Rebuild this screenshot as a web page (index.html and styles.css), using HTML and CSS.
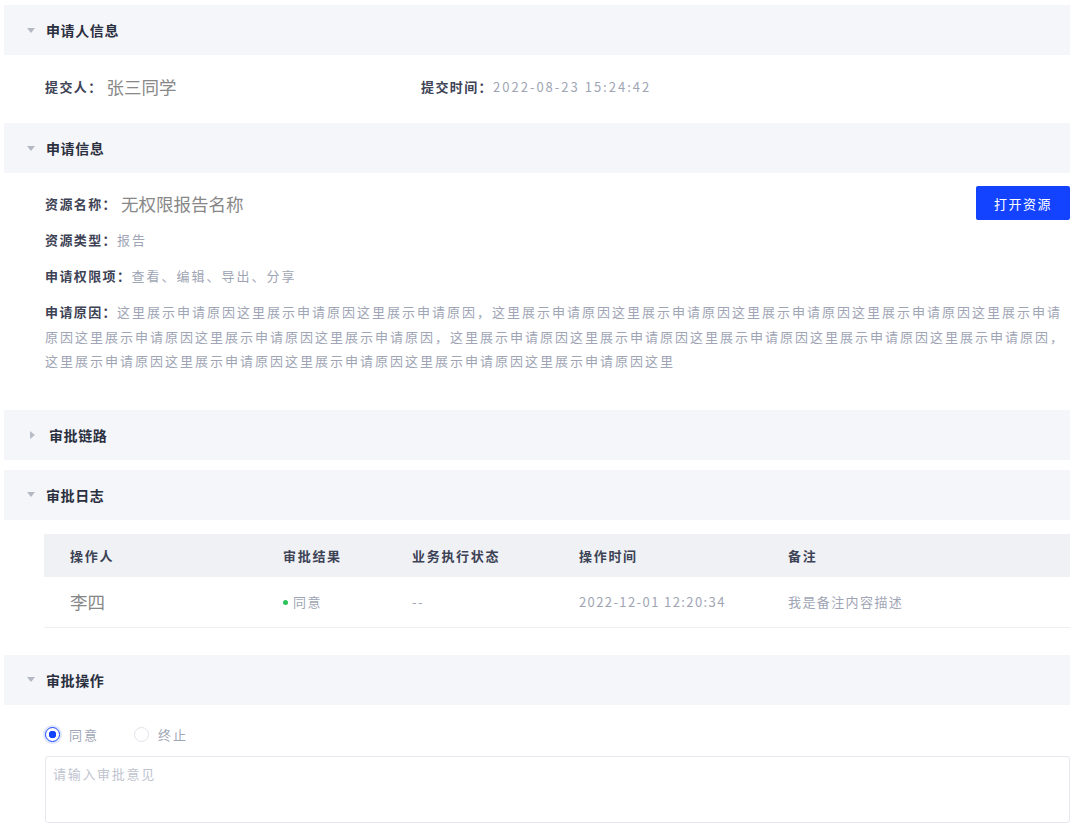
FILE: index.html
```html
<!DOCTYPE html>
<html lang="zh-CN">
<head>
  <meta charset="UTF-8" />
  <meta name="viewport" content="width=device-width, initial-scale=1.0"/>
  <title>审批详情</title>
  <link rel="stylesheet" href="styles.css">
</head>
<body>
<main class="detail">

  <section class="panel">
    <div class="panel-head"><span class="arrow down"></span>申请人信息</div>
    <div class="panel-body info-cols">
      <div class="field"><span class="label">提交人：</span><span class="value-lg">张三同学</span></div>
      <div class="field"><span class="label">提交时间：</span><span class="value">2022-08-23 15:24:42</span></div>
    </div>
  </section>

  <section class="panel">
    <div class="panel-head"><span class="arrow down"></span>申请信息</div>
    <div class="panel-body apply">
      <div class="field name-row">
        <div class="field"><span class="label">资源名称：</span><span class="value-lg">无权限报告名称</span></div>
        <button type="button" class="btn-primary">打开资源</button>
      </div>
      <div class="field row"><span class="label">资源类型：</span><span class="value">报告</span></div>
      <div class="field row"><span class="label">申请权限项：</span><span class="value">查看、编辑、导出、分享</span></div>
      <p class="reason"><span class="label">申请原因：</span><span class="value">这里展示申请原因这里展示申请原因这里展示申请原因，这里展示申请原因这里展示申请原因这里展示申请原因这里展示申请原因这里展示申请原因这里展示申请原因这里展示申请原因这里展示申请原因，这里展示申请原因这里展示申请原因这里展示申请原因这里展示申请原因这里展示申请原因，这里展示申请原因这里展示申请原因这里展示申请原因这里展示申请原因这里展示申请原因这里</span></p>
    </div>
  </section>

  <section class="panel">
    <div class="panel-head"><span class="arrow right"></span>审批链路</div>
  </section>

  <section class="panel">
    <div class="panel-head"><span class="arrow down"></span>审批日志</div>
    <div class="panel-body log">
      <table class="log-table">
        <thead>
          <tr><th class="c1">操作人</th><th class="c2">审批结果</th><th class="c3">业务执行状态</th><th class="c4">操作时间</th><th>备注</th></tr>
        </thead>
        <tbody>
          <tr>
            <td class="c1"><span class="value-lg">李四</span></td>
            <td class="c2"><span class="dot"></span>同意</td>
            <td class="c3">--</td>
            <td class="c4">2022-12-01 12:20:34</td>
            <td>我是备注内容描述</td>
          </tr>
        </tbody>
      </table>
    </div>
  </section>

  <section class="panel">
    <div class="panel-head"><span class="arrow down"></span>审批操作</div>
    <div class="panel-body operate">
      <div class="radios">
        <label class="radio checked"><span class="ring"></span>同意</label>
        <label class="radio"><span class="ring"></span>终止</label>
      </div>
      <textarea class="opinion" placeholder="请输入审批意见"></textarea>
    </div>
  </section>

</main>
</body>
</html>
```

FILE: styles.css
```css
body {
  margin: 0;
  background: #fff;
  font-family: "Noto Sans CJK SC", "Noto Sans", sans-serif;
  font-size: 13px;
  color: #3d4255;
}

.detail {
  padding: 5px 10px 0 4px;
}

.panel-head {
  height: 50px;
  background-color: #f5f6fa;
  display: flex;
  align-items: center;
  padding-left: 23px;
  font-size: 14px;
  font-weight: 700;
  letter-spacing: 0.6px;
  color: #2b3040;
}

.arrow {
  width: 0;
  height: 0;
  margin-right: 11px;
}
.arrow.down {
  border-left: 4px solid transparent;
  border-right: 4px solid transparent;
  border-top: 5px solid #b4b8c4;
}
.arrow.right {
  border-top: 4px solid transparent;
  border-bottom: 4px solid transparent;
  border-left: 5px solid #b8bcc8;
  margin-left: 3px;
  margin-right: 14px;
}

.panel-body {
  padding-left: 41px;
}

.label {
  font-weight: 700;
  letter-spacing: 1.4px;
  color: #3d4255;
}
.value {
  color: #a0a5b5;
  letter-spacing: 2px;
}
.value-lg {
  font-size: 17.5px;
  color: #888;
  margin-left: 4px;
}

.field {
  display: flex;
  align-items: center;
}

.info-cols {
  display: grid;
  grid-template-columns: 376px 1fr;
  height: 68px;
  align-items: center;
  padding-bottom: 6px;
  box-sizing: border-box;
}

.apply {
  padding-top: 13px;
  padding-bottom: 36px;
}
.name-row {
  justify-content: space-between;
  height: 34px;
  margin-bottom: 1px;
}
.row {
  height: 36px;
}

.btn-primary {
  width: 94px;
  height: 34px;
  border: none;
  border-radius: 2px;
  background-color: #1443ff;
  color: #fff;
  font-family: inherit;
  font-size: 13px;
  letter-spacing: 1.5px;
  cursor: pointer;
}

.reason {
  margin: 7px 0 0;
  line-height: 24.5px;
}

.panel:nth-child(4) {
  margin-top: 10px;
}

.log {
  padding: 14px 0 27px 40px;
}
.log-table {
  width: 100%;
  border-collapse: collapse;
}
.log-table th {
  height: 43px;
  background-color: #f0f1f5;
  text-align: left;
  font-weight: 700;
  letter-spacing: 1.7px;
  color: #3d4255;
  padding: 0;
}
.log-table td {
  height: 50px;
  border-bottom: 1px solid #eceef2;
  color: #a0a5b5;
  letter-spacing: 1.4px;
  padding: 0;
}
.log-table td .value-lg {
  margin-left: 0;
  letter-spacing: 0;
}
.log-table th:first-child,
.log-table td:first-child {
  padding-left: 26px;
}
.c1 { width: 213px; }
.c2 { width: 129px; }
.c3 { width: 167px; }
.c4 { width: 209px; }

.dot {
  display: inline-block;
  width: 5px;
  height: 5px;
  border-radius: 50%;
  background-color: #2bc35b;
  margin-right: 5px;
  vertical-align: middle;
  position: relative;
  top: -1px;
}

.operate {
  padding-top: 19px;
}
.radios {
  display: flex;
  gap: 35px;
  height: 22px;
  align-items: center;
  margin-bottom: 10px;
}
.radio {
  display: flex;
  align-items: center;
  gap: 9px;
  color: #a0a5b5;
  letter-spacing: 2px;
}
.ring {
  width: 15px;
  height: 15px;
  border-radius: 50%;
  border: 1px solid #e1e3ea;
  box-sizing: border-box;
  background: #fff;
}
.radio.checked .ring {
  border: 1px solid #1443ff;
  box-shadow: 0 0 0 2px #dfe5ff;
  background: radial-gradient(circle, #1443ff 0 3.5px, #fff 4px);
}

.opinion {
  display: block;
  width: 100%;
  height: 67px;
  box-sizing: border-box;
  border: 1px solid #e6e8ee;
  border-radius: 3px;
  padding: 7px 7px;
  font-family: inherit;
  font-size: 13px;
  letter-spacing: 1.7px;
  resize: none;
}
.opinion::placeholder {
  color: #c0c4cf;
}
```
